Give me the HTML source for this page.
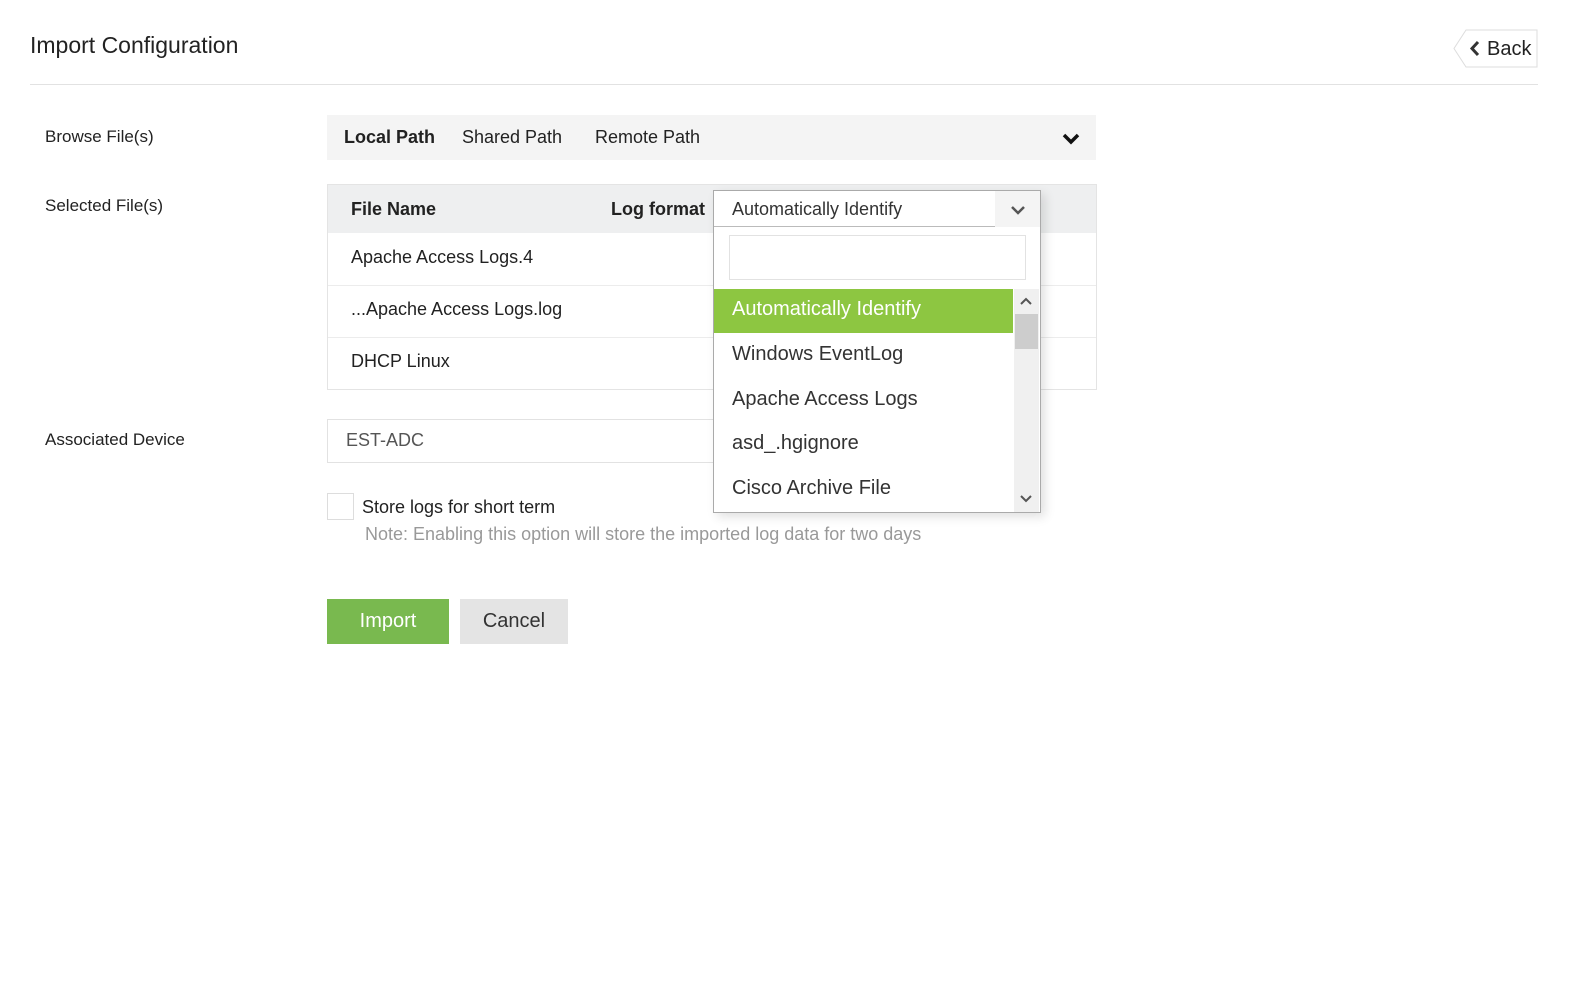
<!DOCTYPE html>
<html><head><meta charset="utf-8"><style>
*{box-sizing:border-box;margin:0;padding:0}
body{width:1581px;height:993px;background:#fff;font-family:"Liberation Sans",sans-serif;color:#222;position:relative;overflow:hidden}
.a{position:absolute}
.t{font-size:18px}
</style></head><body>
<div class="a" style="left:30px;top:32px;font-size:23px;color:#222">Import Configuration</div>
<svg class="a" style="left:1452px;top:28px" width="88" height="42"><path d="M14 2 L85 2 L85 39 L14 39 L2 20.5 Z" fill="#fff" stroke="#ddd"/><path d="M26 14 L20 20.5 L26 27" fill="none" stroke="#333" stroke-width="3"/><text x="35" y="27" font-family="Liberation Sans" font-size="20" fill="#222">Back</text></svg>
<div class="a" style="left:30px;top:84px;width:1508px;height:1px;background:#e2e2e2"></div>

<div class="a t" style="left:45px;top:127px;font-size:17px">Browse File(s)</div>
<div class="a" style="left:327px;top:115px;width:769px;height:45px;background:#f4f4f4"></div>
<div class="a t" style="left:344px;top:127px;font-weight:bold">Local Path</div>
<div class="a t" style="left:462px;top:127px">Shared Path</div>
<div class="a t" style="left:595px;top:127px">Remote Path</div>
<svg class="a" style="left:1062px;top:132px" width="18" height="14"><path d="M2 3 L9 10 L16 3" fill="none" stroke="#111" stroke-width="3.5"/></svg>

<div class="a t" style="left:45px;top:196px;font-size:17px">Selected File(s)</div>
<div class="a" style="left:327px;top:184px;width:770px;height:206px;border:1px solid #e4e4e4"></div>
<div class="a" style="left:328px;top:185px;width:768px;height:48px;background:#eeeff0"></div>
<div class="a t" style="left:351px;top:199px;font-weight:bold">File Name</div>
<div class="a t" style="left:611px;top:199px;font-weight:bold">Log format</div>
<div class="a" style="left:328px;top:285px;width:768px;height:1px;background:#ececec"></div>
<div class="a" style="left:328px;top:337px;width:768px;height:1px;background:#ececec"></div>
<div class="a t" style="left:351px;top:247px">Apache Access Logs.4</div>
<div class="a t" style="left:351px;top:299px">...Apache Access Logs.log</div>
<div class="a t" style="left:351px;top:351px">DHCP Linux</div>

<div class="a t" style="left:45px;top:430px;font-size:17px">Associated Device</div>
<div class="a" style="left:327px;top:419px;width:700px;height:44px;border:1px solid #e2e2e2"></div>
<div class="a t" style="left:346px;top:430px;color:#555">EST-ADC</div>

<div class="a" style="left:327px;top:493px;width:27px;height:27px;border:1px solid #ddd"></div>
<div class="a t" style="left:362px;top:497px">Store logs for short term</div>
<div class="a" style="left:365px;top:524px;font-size:18px;color:#999">Note: Enabling this option will store the imported log data for two days</div>

<div class="a" style="left:327px;top:599px;width:122px;height:45px;background:#79b94f;color:#fff;font-size:20px;text-align:center;line-height:45px">Import</div>
<div class="a" style="left:460px;top:599px;width:108px;height:45px;background:#e4e4e4;color:#333;font-size:20px;text-align:center;line-height:45px">Cancel</div>

<!-- dropdown -->
<div class="a" style="left:713px;top:190px;width:328px;height:323px;background:#fff;border:1px solid #aaa;box-shadow:4px 4px 10px rgba(0,0,0,0.12)"></div>
<div class="a" style="left:714px;top:191px;width:326px;height:36px;border-bottom:1px solid #bbb"></div>
<div class="a" style="left:995px;top:191px;width:45px;height:36px;background:#f4f4f4"></div>
<svg class="a" style="left:1010px;top:204px" width="16" height="12"><path d="M2 3 L8 9 L14 3" fill="none" stroke="#555" stroke-width="2.5"/></svg>
<div class="a t" style="left:732px;top:199px;color:#333">Automatically Identify</div>
<div class="a" style="left:729px;top:235px;width:297px;height:45px;border:1px solid #e2e2e2"></div>
<div class="a" style="left:714px;top:289px;width:299px;height:44px;background:#8dc641"></div>
<div class="a" style="left:732px;top:298px;font-size:20px;color:#fff">Automatically Identify</div>
<div class="a" style="left:732px;top:343px;font-size:20px;color:#333">Windows EventLog</div>
<div class="a" style="left:732px;top:388px;font-size:20px;color:#333">Apache Access Logs</div>
<div class="a" style="left:732px;top:432px;font-size:20px;color:#333">asd_.hgignore</div>
<div class="a" style="left:732px;top:477px;font-size:20px;color:#333">Cisco Archive File</div>
<div class="a" style="left:1014px;top:289px;width:25px;height:223px;background:#f0f0f0"></div>
<div class="a" style="left:1015px;top:314px;width:23px;height:35px;background:#cdcdcd"></div>
<svg class="a" style="left:1019px;top:296px" width="14" height="10"><path d="M2 8 L7 3 L12 8" fill="none" stroke="#555" stroke-width="2"/></svg>
<svg class="a" style="left:1019px;top:494px" width="14" height="10"><path d="M2 2 L7 7 L12 2" fill="none" stroke="#555" stroke-width="2"/></svg>
</body></html>
